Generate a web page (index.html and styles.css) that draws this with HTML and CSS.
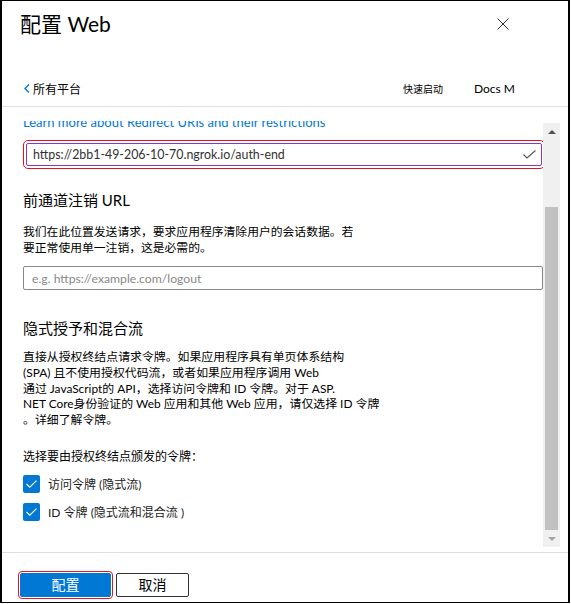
FILE: index.html
```html
<!DOCTYPE html>
<html lang="zh-CN">
<head>
<meta charset="utf-8">
<title>配置 Web</title>
<link rel="stylesheet" href="styles.css">
</head>
<body>
<div class="panel">
  <header class="header">
    <div class="titlebar">
      <h1 class="title">配置 Web</h1>
      <svg class="close" width="12" height="12" viewBox="0 0 12 12"><path d="M0.5 0.5 L11.5 11.5 M11.5 0.5 L0.5 11.5" stroke="#333" stroke-width="1" fill="none"/></svg>
    </div>
    <nav class="navrow">
      <a class="back"><svg class="chev" width="6" height="9" viewBox="0 0 6 9"><path d="M5 0.5 L1 4.5 L5 8.5" stroke="#0078d4" stroke-width="1.4" fill="none"/></svg>所有平台</a>
      <span class="quick">快速启动</span>
      <span class="docs">Docs M</span>
    </nav>
  </header>

  <main class="body">
    <div class="scroll">
      <a class="link">Learn more about Redirect URIs and their restrictions</a>
      <div class="input redirect">
        <span class="value">https://2bb1-49-206-10-70.ngrok.io/auth-end</span>
        <svg class="check" width="13" height="9" viewBox="0 0 13 9"><path d="M0.5 4.5 L4 8 L12.5 0.5" stroke="#555" stroke-width="1.1" fill="none"/></svg>
      </div>

      <h2 class="heading h-front">前通道注销 URL</h2>
      <p class="text desc">我们在此位置发送请求，要求应用程序清除用户的会话数据。若<br>要正常使用单一注销，这是必需的。</p>
      <div class="input logout"><span class="placeholder">e.g. https://example.com/logout</span></div>

      <h2 class="heading h-implicit">隐式授予和混合流</h2>
      <p class="text para">直接从授权终结点请求令牌。如果应用程序具有单页体系结构<br>(SPA) 且不使用授权代码流，或者如果应用程序调用 Web<br>通过 JavaScript的 API，选择访问令牌和 ID 令牌。对于 ASP.<br>NET Core身份验证的 Web 应用和其他 Web 应用，请仅选择 ID 令牌<br>。详细了解令牌。</p>

      <p class="text choose">选择要由授权终结点颁发的令牌：</p>
      <label class="cbrow">
        <span class="cb"><svg width="11" height="8" viewBox="0 0 11 8"><path d="M0.5 4 L3.8 7.2 L10.5 0.6" stroke="#fff" stroke-width="1.1" fill="none"/></svg></span>
        <span class="cblabel">访问令牌 (隐式流)</span>
      </label>
      <label class="cbrow">
        <span class="cb"><svg width="11" height="8" viewBox="0 0 11 8"><path d="M0.5 4 L3.8 7.2 L10.5 0.6" stroke="#fff" stroke-width="1.1" fill="none"/></svg></span>
        <span class="cblabel">ID 令牌 (隐式流和混合流 )</span>
      </label>
    </div>
    <div class="scrollbar">
      <span class="arrow up"></span>
      <span class="thumb"></span>
      <span class="arrow down"></span>
    </div>
  </main>

  <footer class="footer">
    <button class="btn primary">配置</button>
    <button class="btn secondary">取消</button>
  </footer>
</div>
</body>
</html>
```

FILE: styles.css
```css
* { box-sizing: border-box; }
html, body { margin: 0; padding: 0; background: #fff; }
body {
  font-family: Lato, "Noto Sans CJK SC", sans-serif;
  color: #1b1a19;
}
.panel {
  width: 570px;
  height: 603px;
  border-style: solid;
  border-color: #000;
  border-width: 1px 2px 1px 2px;
  display: flex;
  flex-direction: column;
  overflow: hidden;
}
.header {
  height: 106px;
  border-bottom: 1px solid #e1dfdd;
  flex: none;
}
.titlebar {
  height: 46px;
  display: flex;
  align-items: center;
  justify-content: space-between;
  padding: 0 59px 0 18px;
}
.title {
  margin: 0;
  font-size: 21px;
  font-weight: 400;
  line-height: 28px;
  color: #000;
}
.navrow {
  margin-top: 31px;
  height: 20px;
  display: flex;
  align-items: center;
  padding: 0 53px 0 22px;
  font-size: 12px;
}
.back { display: flex; align-items: center; gap: 3px; color: #000; }
.chev { display: block; }
.quick { margin-left: auto; font-size: 10px; color: #000; }
.docs { margin-left: 31px; font-size: 12px; color: #000; }

.body {
  flex: 1;
  display: flex;
  min-height: 0;
}
.scroll {
  flex: 1;
  margin-top: 14px;
  padding-left: 21px;
  overflow: hidden;
  min-width: 0;
}
.link {
  display: block;
  margin-top: -7px;
  font-size: 13px;
  line-height: 16px;
  color: #0078d4;
  white-space: nowrap;
}
.input {
  display: flex;
  align-items: center;
  justify-content: space-between;
  height: 23px;
  padding: 0 5px 0 8px;
  font-size: 13px;
  border: 1px solid #8a8886;
  border-radius: 2px;
}
.redirect {
  margin: 13px 1px 0 3px;
  padding-left: 6px;
  font-size: 12.4px;
  border-color: #8a3ab9;
  outline: 1px solid #e81123;
  outline-offset: 2px;
  color: #323130;
}
.check { display: block; }
.logout {
  margin-top: 11px;
  height: 24px;
  font-size: 12.2px;
}
.placeholder { color: #8a8886; }
.heading {
  margin: 0;
  font-size: 15px;
  font-weight: 400;
  line-height: 20px;
  color: #000;
}
.h-front { margin-top: 24px; }
.h-implicit { margin-top: 28px; }
.text {
  margin: 0;
  font-size: 12px;
  color: #000;
}
.desc { margin-top: 14px; line-height: 15.5px; font-size: 11.8px; }
.para { margin-top: 11px; line-height: 15.75px; font-size: 11.9px; }
.choose { margin-top: 21px; line-height: 16px; }
.cbrow {
  display: flex;
  align-items: center;
  gap: 8px;
  height: 18px;
  margin-top: 10px;
  font-size: 12px;
}
.cb {
  width: 17px;
  height: 18px;
  background: #0078d4;
  border-radius: 2px;
  display: flex;
  align-items: center;
  justify-content: center;
}
.cb svg { display: block; }

.scrollbar {
  flex: none;
  width: 17px;
  margin: 16px 8px 5px 0;
  background: #f0f0f0;
  display: flex;
  flex-direction: column;
  align-items: center;
}
.arrow {
  width: 0; height: 0;
  border-left: 4px solid transparent;
  border-right: 4px solid transparent;
  flex: none;
}
.arrow.up { border-bottom: 4px solid #505050; margin: 7px 0 73px; }
.arrow.down { border-top: 4px solid #a3a3a3; margin: 7px 0 6px; }
.thumb {
  flex: 1;
  width: 13px;
  background: #c1c1c1;
}

.footer {
  flex: none;
  height: 50px;
  border-top: 1px solid #e1dfdd;
  display: flex;
  align-items: flex-start;
  padding: 20px 0 0 16px;
  gap: 5px;
}
.btn {
  height: 24px;
  font-family: inherit;
  font-size: 14px;
  line-height: 22px;
  border-radius: 2px;
  padding: 0;
  cursor: pointer;
}
.primary {
  width: 91px;
  background: #0078d4;
  border: 1px solid #0078d4;
  color: #fff;
  outline: 1px solid #e81123;
  outline-offset: 1px;
  margin-left: 2px;
}
.secondary {
  width: 73px;
  background: #fff;
  border: 1px solid #323130;
  color: #000;
}
```
